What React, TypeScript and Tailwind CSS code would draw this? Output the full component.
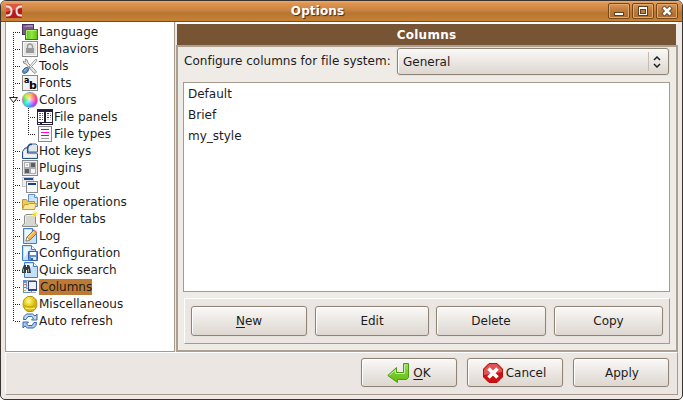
import React, { type ReactNode } from "react";

const Icon = ({ children }: { children: ReactNode }) => (
  <svg width="16" height="16" viewBox="0 0 16 16" className="block shrink-0">{children}</svg>
);

const Page = ({ x = 1 }: { x?: number }) => (
  <g>
    <path d={`M${x + 0.5} .5h9l4 4v11h-13z`} fill="#c4e0f9" stroke="#427fc2" />
    <path d={`M${x + 2} 2h7l-7 11z`} fill="#edf7ff" />
    <path d={`M${x + 9.5} .5v4h4`} fill="#fff" stroke="#427fc2" />
  </g>
);

const LanguageIcon = () => (
  <Icon>
    <defs><linearGradient id="green"><stop stopColor="#62b52b" /><stop offset=".5" stopColor="#8ee83b" /><stop offset="1" stopColor="#63bd17" /></linearGradient></defs>
    <rect x=".5" y=".5" width="11" height="10" fill="#7c5b8c" stroke="#4b315b" />
    <path d="M1 3l5-2h5v2z" fill="#a58ab1" />
    <rect x="3.5" y="5.5" width="12" height="10" fill="url(#green)" stroke="#357e11" />
    <path d="M4.5 14.5v-8h10" fill="none" stroke="#a9f46a" />
  </Icon>
);
const BehaviorsIcon = () => (
  <Icon>
    <rect x=".5" y=".5" width="15" height="15" fill="#e4e4e4" stroke="#8b8b8b" />
    <rect x="1.5" y="1.5" width="13" height="13" fill="none" stroke="#f8f8f8" />
    <path d="M5.5 8V5.5a2.5 2.5 0 015 0V8" fill="none" stroke="#999" strokeWidth="1.4" />
    <rect x="4" y="7" width="8" height="5" fill="#999" />
  </Icon>
);
const ToolsIcon = () => (
  <Icon>
    <path d="M3 1l1 2-1 1-2-1q0 3 3 3l7 8 2 1.5 1.5-1.5L13 12 6 5Q6 1 3 1z" fill="#e4e4e4" stroke="#8a8a8a" strokeWidth=".9" />
    <path d="M14 1l1 1-1.500 2.500L8 10 7 9l5-6z" fill="#f2f2f2" stroke="#8a8a8a" strokeWidth=".8" />
    <path d="M5.500 9.200L7 10.700 5.500 14 3 15.300H1.500L.7 14.500V12.500L3 10z" fill="#6a90bd" stroke="#2c5285" strokeWidth=".9" />
    <path d="M2 13l2.500-2.500" stroke="#a8c6e3" />
  </Icon>
);
const FontsIcon = () => (
  <Icon>
    <rect x=".5" y=".5" width="15" height="15" fill="#f3f3f3" stroke="#888" />
    <text x="2" y="8" className="fill-black font-['DejaVu_Sans'] text-[8px] font-bold">a</text>
    <text x="7" y="14" className="fill-black font-['DejaVu_Sans'] text-[11px] font-bold">b</text>
  </Icon>
);
const ColorsIcon = () => (
  <span className="block size-4 shrink-0 rounded-full border border-[#aaa9] bg-[radial-gradient(circle,#fffc_0%,#fff0_75%),conic-gradient(#ffb02a,#ff4848,#ff1592,#a01cff,#2684ff,#00e5e5,#10e45b,#b5ee22,#ffb02a)]" />
);
const PanelsIcon = () => (
  <Icon>
    <g shapeRendering="crispEdges">
      <path fill="#20203c" d="M0 0h16v16H0z" /><path fill="#171ba8" d="M0 0h15v1H0z" />
      <path fill="#fff" d="M1 3h6v10H1zM9 3h6v10H9zM1 14h2v1H1zM5 14h10v1H5z" />
      <path fill="red" d="M2 4h2v1H2zM5 4h1v1H5zM2 10h2v1H2zM5 10h1v1H5z" />
      <path fill="#f0e" d="M2 6h2v1H2zM5 6h1v1H5z" />
      <path fill="#00bd25" d="M2 8h2v1H2zM5 8h1v1H5z" />
      <path fill="#1027f7" d="M10 4h2v1h-2zM13 6h1v1h-1zM10 8h2v1h-2z" />
      <path fill="#00e5f9" d="M13 4h1v1h-1zM10 6h2v1h-2zM13 8h1v1h-1z" />
      <path fill="#f3e900" d="M10 10h2v1h-2zM13 10h1v1h-1z" />
    </g>
  </Icon>
);
const TypesIcon = () => (
  <Icon>
    <g shapeRendering="crispEdges">
      <path d="M1 0h14v16H1z" fill="#888" /><path d="M2 1h12v14H2z" fill="#f7f7f7" />
      <path fill="red" d="M4 3h8v1H4z" /><path fill="#f0e" d="M4 6h8v1H4z" /><path fill="#00862c" d="M4 9h8v1H4z" /><path fill="#999" d="M4 12h8v1H4z" />
    </g>
  </Icon>
);
const KeysIcon = () => (
  <Icon>
    <path d="M6 9V4l2-3h6l1.500 1.500V9z" fill="#e3e8ec" stroke="#3e6496" />
    <path d="M5 9V5l2.500-3.500H10" fill="none" stroke="#24508a" strokeWidth="1.500" />
    <path d="M.5 15.500V8.500L3 5h2.500v5h9l1 1v4.500z" fill="#dde1e5" stroke="#24508a" />
    <path d="M2 9l1.500-2H4v4.500h10V14H2z" fill="#f2f2f2" />
  </Icon>
);
const PluginsIcon = () => (
  <Icon>
    <g shapeRendering="crispEdges">
      <path d="M0 0h16v16H0z" fill="#888" /><path d="M1 1h14v14H1z" fill="#eee" />
      <path d="M2 2h6v6H2zM8 2h6v6H8zM2 8h6v6H2zM8 8h6v6H8z" fill="#a9adb0" />
      <path d="M3 3h4v4H3zM9 9h4v4H9z" fill="#f6f6f6" />
      <path d="M9 3h4v4H9zM3 9h4v4H3z" fill="#59605f" />
      <path d="M4 4h2v2H4z" fill="#c5c8c9" />
    </g>
  </Icon>
);
const LayoutIcon = () => (
  <Icon>
    <g shapeRendering="crispEdges">
      <path d="M0 0h12v10H0z" fill="#c8c8c8" /><path d="M1 1h10v8H1z" fill="#eee" /><path d="M2 1h9v2H2z" fill="#224b91" />
      <path d="M4 4h12v12H4z" fill="#8c8c8c" /><path d="M5 5h10v10H5z" fill="#f8f8f8" /><path d="M6 6h8v2H6z" fill="#173d85" />
    </g>
  </Icon>
);
const OperationsIcon = () => (
  <Icon>
    <path d="M6.500.5h6l3 3v9h-9z" fill="#cce3fb" stroke="#5b91ce" /><path d="M12.500.5v3h3" fill="#fff" stroke="#5b91ce" />
    <path d="M.5 14V5.500h4l1 2h7V15H1z" fill="#edcb63" stroke="#c39329" />
    <path d="M.5 15.500l2-5h4l1-1h7l-2 6z" fill="#f9e79c" stroke="#c89c32" />
  </Icon>
);
const TabsIcon = () => (
  <Icon>
    <path d="M.5 15.500v-1.500l2-1.500V5L4 3.500h8L13.500 5v7.500l2 1.500v1.500z" fill="#d6d7d1" stroke="#8a8c84" />
    <path d="M3.500 12V5.500l1-1h7" fill="none" stroke="#efefec" />
    <path d="M13 0v6M10 3h6M11 1l4 4m0-4l-4 4" stroke="#fff04a" /><path d="M12 2h2v2h-2z" fill="#ffe800" />
  </Icon>
);
const LogIcon = () => (
  <Icon><Page /><path d="M4 13l1-4 7-7 3 3-7 7z" fill="#efb854" stroke="#a96823" /><path d="M5.500 10l7-7" stroke="#ffe79c" /><path d="M4 13l1-4 3 3z" fill="#fff0d2" stroke="#8d765e" strokeWidth=".6" /><path d="M12 2l3 3" stroke="#d87878" strokeWidth="1.500" /></Icon>
);
const ConfigIcon = () => (
  <Icon><Page x={0} /><path d="M6.500 6.500h9v9h-8l-1-1z" fill="#6190d4" stroke="#345fa6" /><path d="M8 7h6v3H8z" fill="#fff" /><path d="M9 12h5v3H9z" fill="#e6e6e6" /><path d="M9 13h2v2H9z" fill="#355c9b" /></Icon>
);
const SearchIcon = () => (
  <Icon><Page x={2} /><path d="M1 5l1-2h2v2h1V3h2l1 2 1 6H5V8H4v3H0V8z" fill="#353c42" /><path d="M1 7h1v3H1zm5 0h1v3H6z" fill="#9ba3aa" /></Icon>
);
const ColumnsIcon = () => (
  <Icon>
    <g shapeRendering="crispEdges">
      <path d="M1 1h9v13H1z" fill="#5d91d3" /><path d="M2 4h7v9H2z" fill="#f2f2f2" />
      <path fill="#db624e" d="M2 5h2v1H2z" /><path fill="#32b466" d="M2 8h2v1H2z" /><path fill="#d6a833" d="M2 11h2v1H2z" />
      <path d="M4 1h10v9H4z" fill="#8697b5" /><path d="M5 2h8v7H5z" fill="#ddd" />
      <path d="M6 2h9v10H6z" fill="#2c458d" /><path d="M7 3h7v7H7z" fill="#f0f0ee" /><path d="M8 13h6v1H8z" fill="#9da7ba" />
    </g>
  </Icon>
);
const MiscIcon = () => (
  <Icon>
    <defs><radialGradient id="gold" cx=".4" cy=".3"><stop stopColor="#fffab4" /><stop offset=".5" stopColor="#f0da2d" /><stop offset="1" stopColor="#d6b40e" /></radialGradient></defs>
    <path d="M5.500.5h5L14 3.500l.8 3v4L12.500 14l-2 1.500h-5L3.500 14l-2.300-3.500v-4l.8-3z" fill="url(#gold)" stroke="#b6941c" />
    <path d="M2 9.500q6 3 12 0" fill="none" stroke="#c8a80f" /><path d="M3 12q5 2 10 0" fill="none" stroke="#fff276" />
  </Icon>
);
const RefreshIcon = () => (
  <Icon>
    <path d="M1.500 6.500L2 3.500 4.500 1h6L13 3l2-2v6H9.500l2-2-2-1.500H6L4 6.500z" fill="#c3daf0" stroke="#3767a4" />
    <path d="M14.500 9.500l-.5 3-2.500 2.500h-6L3 13l-2 2V9h5.500l-2 2 2 1.500H10l2-3z" fill="#a9c9ea" stroke="#3767a4" />
  </Icon>
);

const items: { name: string; icon: () => ReactNode; child?: boolean }[] = [
  { name: "Language", icon: LanguageIcon }, { name: "Behaviors", icon: BehaviorsIcon },
  { name: "Tools", icon: ToolsIcon }, { name: "Fonts", icon: FontsIcon }, { name: "Colors", icon: ColorsIcon },
  { name: "File panels", icon: PanelsIcon, child: true }, { name: "File types", icon: TypesIcon, child: true },
  { name: "Hot keys", icon: KeysIcon }, { name: "Plugins", icon: PluginsIcon }, { name: "Layout", icon: LayoutIcon },
  { name: "File operations", icon: OperationsIcon }, { name: "Folder tabs", icon: TabsIcon }, { name: "Log", icon: LogIcon },
  { name: "Configuration", icon: ConfigIcon }, { name: "Quick search", icon: SearchIcon }, { name: "Columns", icon: ColumnsIcon },
  { name: "Miscellaneous", icon: MiscIcon }, { name: "Auto refresh", icon: RefreshIcon },
];

const TreeLines = () => (
  <svg className="absolute left-0 top-0" width="40" height="310" viewBox="6 22 40 310" shapeRendering="crispEdges">
    <g stroke="#222" strokeDasharray="1 1">
      <path d="M13.500 32v290M28.500 108v27" />
      {items.map(({ name, child }, i) => <path key={name} d={`M${child ? 30 : 15} ${32.5 + 17 * i}h6`} />)}
    </g>
    <path d="M9.500 97.500h8l-4 5z" fill="#fff" stroke="#222" shapeRendering="auto" />
  </svg>
);

const Button = ({ children, className }: { children: ReactNode; className: string }) => (
  <button className={`flex shrink-0 items-center justify-center rounded-[3px] border border-[#8f8375] bg-linear-to-b from-[#faf9f8] via-[#ebe7e3] to-[#ded7d1] shadow-[inset_1px_1px_#fff,0_0_0_1px_#e7e1dc] ${className}`}>{children}</button>
);

const WindowButton = ({ children }: { children: ReactNode }) => (
  <button className="h-4 w-[22px] rounded-[2px] border border-[#754819] bg-linear-to-b from-[#d99858] via-[#bd783a] to-[#ae6b2a] shadow-[inset_0_0_0_1px_#dfaa72]">
    <svg width="20" height="14" viewBox="0 0 20 14" shapeRendering="crispEdges">{children}</svg>
  </button>
);

export default function App() {
  return (
    <div className="h-[400px] w-[683px] bg-white font-['DejaVu_Sans',sans-serif] text-[12px] leading-[17px] text-[#1c1c1c]">
      <main className="flex h-full flex-col overflow-hidden rounded-t-[6px] rounded-b-[5px] border border-[#393430] bg-[#eee9e5]">
        <header className="flex h-[21px] shrink-0 items-center border-b border-[#79491b] bg-[linear-gradient(#f3ac68_0,#df9652_2px,#cb8340_9px,#b87531_12px,#c78237_20px)] pl-[5px] pr-1">
          <svg width="16" height="16" viewBox="0 0 16 16">
            <path fill="#bb1818" d="M0 1h16v14H0z" /><path fill="#e0553f" d="M0 1h16v4L0 9z" />
            <path d="M0 3.500h1q4.500 0 4.500 4.500T1 12.500H0M16 3.500h-1q-4.500 0-4.500 4.500t4.500 4.500h1" fill="none" stroke="#e5e5e5" strokeWidth="2" />
          </svg>
          <h1 className="grow pl-[5px] text-center text-[12px] font-bold tracking-[0.1px] text-white [text-shadow:1px_1px_1px_#442b12]">Options</h1>
          <div className="flex gap-[2px]">
            <WindowButton><path d="M5 8h10v4H5z" fill="#60401f" /><path d="M6 9h8v2H6z" fill="#fff" /></WindowButton>
            <WindowButton><path d="M5 2h10v10H5z" fill="#60401f" /><path d="M6 3h8v8H6z" fill="#fff" /><path d="M7 5h6v5H7z" fill="#60401f" /><path d="M8 6h4v3H8z" fill="#c07c3c" /></WindowButton>
            <WindowButton><g shapeRendering="auto"><path d="M6 3l8 8m0-8l-8 8" stroke="#60401f" strokeWidth="4.500" /><path d="M6.500 3.500l7 7m0-7l-7 7" stroke="#fff" strokeWidth="2.600" /></g></WindowButton>
          </div>
        </header>
        <div className="flex h-[330px] shrink-0 pl-1">
          <nav className="relative w-[170px] shrink-0 border-x border-b border-[#a79a8c] bg-white pt-[1px]">
            <TreeLines />
            <ul className="relative">
              {items.map(({ name, icon: ItemIcon, child }) => (
                <li key={name} className={`flex h-[17px] items-center ${child ? "pl-[31px]" : "pl-4"}`}>
                  <ItemIcon />
                  <span className={`ml-px h-4 leading-4 ${name === "Columns" ? "bg-[#be7a35] pl-px" : ""}`}>{name}</span>
                </li>
              ))}
            </ul>
          </nav>
          <section className="ml-px flex w-[502px] shrink-0 flex-col border-t-2 border-white">
            <h2 className="ml-px mr-[2px] h-[21px] shrink-0 bg-[#775433] text-center text-[12px] font-bold leading-[22px] tracking-[0.25px] text-white">Columns</h2>
            <div className="flex grow flex-col border-x-2 border-y-2 border-[#aca093] bg-[#efebe7] pl-[5px]">
              <div className="flex h-[35px] shrink-0 items-start pt-px">
                <label className="mt-[5px] w-[214px] whitespace-nowrap pl-px tracking-[0.02px]">Configure columns for file system:</label>
                <Button className="h-[27px] w-[272px] !justify-between pl-[5px]">
                  <span className="pt-px">General</span>
                  <span className="flex h-[19px] w-[20px] items-center border-l border-[#c5bbb1] pl-1">
                    <svg width="8" height="12" viewBox="0 0 8 12"><path d="M1 4l3-3 3 3M1 8l3 3 3-3" fill="none" stroke="#222" strokeWidth="1.500" /></svg>
                  </span>
                </Button>
              </div>
              <ul className="h-[210px] w-[487px] shrink-0 border border-[#a79a8c] bg-white pl-1 pt-px">
                {["Default", "Brief", "my_style"].map((name) => <li key={name} className="h-[21px] leading-[21px]">{name}</li>)}
              </ul>
              <div className="ml-px mt-[6px] flex h-[46px] w-[486px] border border-b-[#a79a8c] border-l-white border-r-[#a79a8c] border-t-white bg-[#ece6e2] pl-[6px] pt-[7px]">
                <Button className="h-[30px] w-[116px]"><u className="decoration-1 underline-offset-2">N</u>ew</Button>
                <Button className="ml-2 h-[30px] w-[114px]">Edit</Button>
                <Button className="ml-[7px] h-[30px] w-[110px]">Delete</Button>
                <Button className="ml-2 h-[30px] w-[109px]">Copy</Button>
              </div>
            </div>
          </section>
        </div>
        <footer className="ml-1 mr-1 flex h-[43px] shrink-0 justify-end gap-[10px] border border-b-[#a79a8c] border-l-white border-r-[#a79a8c] border-t-white bg-[#ece6e2] pr-2 pt-[5px]">
          <Button className="h-[29px] w-24 gap-1">
            <svg width="22" height="22" viewBox="0 0 22 22"><defs><linearGradient id="ok" x2="0" y2="1"><stop stopColor="#a7dc72" /><stop offset=".5" stopColor="#7ac936" /><stop offset="1" stopColor="#5fc000" /></linearGradient></defs><path d="M16.500 1.500h5v14l-2 2h-9V20.500L.8 13.500 9.500 5.500v5h7z" fill="url(#ok)" stroke="#4c9d0c" /><path d="M17.500 2.500v9h-9V8L2.500 13" fill="none" stroke="#c1eda0" /></svg>
            <span className="pt-px"><u className="decoration-1 underline-offset-2">O</u>K</span>
          </Button>
          <Button className="h-[29px] w-24 gap-[3px] pr-px">
            <svg width="20" height="20" viewBox="0 0 20 20"><path d="M6 .5h8L19.500 6v8L14 19.500H6L.5 14V6z" fill="#cf1010" stroke="#b51212" /><path d="M6.500 1h7L19 6.500V9L1 12V6.500z" fill="#df5454" /><path d="M5.500 5.500l9 9m0-9l-9 9" stroke="white" strokeWidth="3.600" /></svg>
            <span className="pt-px">Cancel</span>
          </Button>
          <Button className="h-[29px] w-24"><span className="pl-[2px] pt-px">Apply</span></Button>
        </footer>
      </main>
    </div>
  );
}
